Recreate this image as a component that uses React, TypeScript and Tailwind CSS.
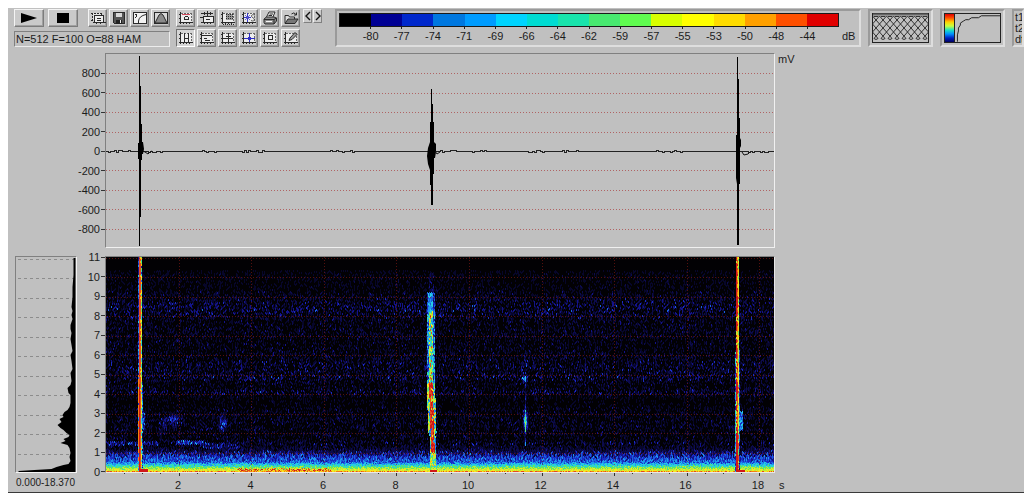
import { useMemo, useState } from 'react';
import type { ReactNode } from 'react';

const SCALE = [
    { color: 'bg-[#000000]', label: '-80' },
    { color: 'bg-[#000094]', label: '-77' },
    { color: 'bg-[#0028cc]', label: '-74' },
    { color: 'bg-[#0078e0]', label: '-71' },
    { color: 'bg-[#009cff]', label: '-69' },
    { color: 'bg-[#00d4ff]', label: '-66' },
    { color: 'bg-[#00dcd2]', label: '-64' },
    { color: 'bg-[#18e4ac]', label: '-62' },
    { color: 'bg-[#48e870]', label: '-59' },
    { color: 'bg-[#60fc50]', label: '-57' },
    { color: 'bg-[#d8ff00]', label: '-55' },
    { color: 'bg-[#ffff00]', label: '-53' },
    { color: 'bg-[#ffdc00]', label: '-50' },
    { color: 'bg-[#ffa000]', label: '-48' },
    { color: 'bg-[#ff5000]', label: '-44' },
    { color: 'bg-[#e00000]', label: '' },
];

const MILLIVOLTS = [800, 600, 400, 200, 0, -200, -400, -600, -800];
const KILOHERTZ = [11, 10, 9, 8, 7, 6, 5, 4, 3, 2, 1, 0];
const SECONDS = [2, 4, 6, 8, 10, 12, 14, 16, 18];
const HALF_SECONDS = Array.from({ length: 36 }, (_, i) => (i + 1) / 2);

const PLOT_W = 668;
const SPEC_H = 215;
const PX_PER_KHZ = 19.5;
const PX_PER_SEC = 36.3;

const PALETTE = [
    '#020104', '#07062a', '#0c0b4c', '#13138a', '#1a2cc4', '#1a60de', '#1f96ee', '#26cce4',
    '#38dea8', '#66e65c', '#bcec38', '#f4ea20', '#fcc010', '#f48010', '#e44a20', '#d01818',
];

function makeRandom(seed: number) {
    let s = seed;
    return () => {
        s = (s + 0x6d2b79f5) | 0;
        let t = Math.imul(s ^ (s >>> 15), 1 | s);
        t = (t + Math.imul(t ^ (t >>> 7), 61 | t)) ^ t;
        return ((t ^ (t >>> 14)) >>> 0) / 4294967296;
    };
}

const bump = (v: number, center: number, width: number) => Math.exp(-(((v - center) / width) ** 2));

// how lively the background noise is at a given frequency
function noiseGain(f: number) {
    if (f > 10.35) return 0.3;
    return 0.78 + 0.6 * bump(f, 8.4, 0.5) + 0.2 * bump(f, 7.2, 0.2) + 0.4 * bump(f, 5.4, 0.5)
        + 0.45 * bump(f, 4.85, 0.15) + 0.55 * bump(f, 4.12, 0.12) - 0.25 * bump(f, 3.6, 0.3)
        + 0.15 * bump(f, 2.6, 0.4) + 0.3 * bump(f, 1.5, 0.15) - (f > 9.3 ? 0.15 : 0);
}

function level(x: number, f: number, rand: () => number) {
    const r = rand();
    const q = rand();
    let v = Math.pow(r, 2.2) * 3.1 * noiseGain(f);
    if (r > 0.985 && f < 10.2) v += 1;

    // low frequency rumble, with a ragged upper edge
    const g = f + (rand() - 0.5) * (f > 0.6 ? 0.36 : 0.1);
    if (g < 1.3) v = Math.max(v, (1.3 - g) * 5 + q * 2);
    if (g < 0.95) v = 2.6 + (0.95 - g) * 3 + q * 3;
    if (g < 0.45) v = 6 + q * 1.8;
    if (g < 0.36) v = 7.2 + q * 2;
    if (g < 0.26) v = 8.8 + q * 2;
    if (g < 0.16) v = 10 + q * 2 + (x > 130 && x < 225 ? q * 4 : 0);
    if (f < 0.06) v = 11 + q * 4;

    // faint calls
    v += 4.2 * bump(x, 66, 7) * bump(f, 2.75, 0.25) * (0.3 + q);
    v += 2 * bump(x, 58, 8) * bump(f, 2.4, 0.3) * q;
    v += 4.2 * bump(x, 116, 4) * bump(f, 2.5, 0.4) * (0.3 + q);
    if (Math.abs(f - 1.48) < 0.09 && x < 52) v += 3.6 * q;
    if (Math.abs(f - 1.55) < 0.09 && x > 69 && x < 98) v += 2 + 2.6 * q;
    if (Math.abs(f - 1.4) < 0.16 && x > 96 && x < 138) v += 3 * q;

    // small click at 11.6 s
    v += 7 * bump(x, 419, 2) * bump(f, 2.65, 0.5);
    v += 5.5 * bump(x, 418, 2.2) * bump(f, 4.8, 0.17);
    v += 3.4 * bump(x, 420, 3) * bump(f, 5.6, 0.2) * q;
    if (x === 419 && f > 1.4 && f < 5) v += 1 + q * 3;

    // click at 0.9 s
    if (x === 32) v = q > 0.6 ? 4 + r * 4 : (f < 5 ? 13 : 3);
    if (x === 33) v = f < 4.5 ? 15 : 14.4;
    if (x === 34) v = f < 4 || q > 0.2 ? 14.8 : 12;
    if (x === 35) v = f > 9.6 ? 3 + q * 10 : 7 + q * 6;
    if (x === 36 && f < 4.6) v = 2 + q * 6;
    if (x >= 36 && x < 39 && f > 2.1 && f < 3.1) v = 2 + q * 5;
    if (x > 33 && x < 42 && f < 0.14) v = 15;

    // click at 9 s, leaning right towards the low end
    if (f < 9.25 && f > 0.3) {
        const shift = f < 4.5 ? (4.5 - f) * 0.6 : 0;
        const d = Math.abs(x - 324.4 - shift);
        if (f > 8.3) {
            if (d < 4) v = (d < 2.4 ? 5 : 2.5) + q * 3;
        } else if (f > 4.6) {
            if (d < 4) v = d < 2.2 ? 6 + q * 6.5 : 3 + q * 6;
            if (d < 1 && q > 0.85) v = 14;
        } else if (f > 1) {
            const wide = f > 2 ? 4.2 : 3;
            if (d < wide) v = d < 1.8 && q > 0.15 ? 14 + q * 1.9 : 5 + r * 8;
        } else if (d < 3) {
            v = 7 + q * 6;
        }
    } else if (f >= 9.25 && f < 10.2 && Math.abs(x - 325) < 3) {
        v = q * 3.6;
    }
    if (x > 323 && x < 331 && f < 0.12) v = 15;

    // click at 17.4 s
    const hot = (f > 8.4 && f < 9.1) || (f > 4 && f < 4.5) || f < 2;
    if (x === 629 && f < 6.2) v = 3 + q * 6;
    if (x === 630) v = hot || q > 0.3 ? 15 : 10;
    if (x === 631) v = hot ? 15 : 12 + q * 3.5;
    if (x === 632) v = hot && q > 0.6 ? 14 : 9.5 + q * 3;
    if (x === 633 && f < 6.4) v = 2 + q * 4.5;
    if (x > 632 && x < 637 && f > 2.15 && f < 3.15) v = 4 + q * 4;
    if (x > 629 && x < 639 && f < 0.12) v = 15;
    return v;
}

function buildSpectrogram() {
    const rand = makeRandom(4711);
    const paths: string[][] = PALETTE.map(() => []);
    for (let x = 0; x < PLOT_W; x++) {
        let y = x % 2 ? -1 : 0;
        while (y < SPEC_H) {
            const nearFloor = y > SPEC_H - 12;
            const h = nearFloor ? 1 : 2;
            const f = (SPEC_H - y - 0.5) / PX_PER_KHZ;
            const i = Math.max(0, Math.min(15, Math.floor(level(x, f, rand))));
            if (i > 0) paths[i].push(`M${x} ${y}h1v${h}h-1z`);
            y += h;
        }
    }
    return paths.map(p => p.join(''));
}

function buildTrace() {
    const rand = makeRandom(99);
    let d = 'M0 97.5';
    for (let x = 2; x <= PLOT_W; x += 2) {
        const busy = Math.sin(x / 17) + Math.sin(x / 7.3) > 0.2;
        const r = rand();
        const dy = busy && r > 0.75 ? 1 : busy && r < 0.2 ? -1 : 0;
        d += `V${97.5 + dy}H${x}`;
    }
    return d;
}

function ToolButton({ label, pressed, className = 'w-[19px]', onClick, children }: {
    label: string;
    pressed?: boolean;
    className?: string;
    onClick?: () => void;
    children: ReactNode;
}) {
    return (
        <button
            type="button"
            aria-label={label}
            title={label}
            onClick={onClick}
            className={`h-[18px] shrink-0 flex items-center justify-center border ${className} ${pressed
                ? 'bg-[#d4d4d4] border-t-[#707070] border-l-[#707070] border-b-white border-r-white'
                : 'bg-[#cacaca] border-t-[#f4f4f4] border-l-[#f4f4f4] border-b-[#7c7c7c] border-r-[#7c7c7c] shadow-[inset_-1px_-1px_0_#a0a0a0]'
                }`}
        >
            {children}
        </button>
    );
}

function Icon({ children }: { children: ReactNode }) {
    return (
        <svg viewBox="0 0 16 16" className="w-4 h-4" fill="none" stroke="#2a2a2a" strokeWidth="1" shapeRendering="crispEdges">
            {children}
        </svg>
    );
}

// plot frame with tick marks, shared by most of the view buttons
function Frame() {
    return (
        <>
            <path d="M3 3h11v9H3z" fill="#ececec" stroke="none" />
            <path d="M3 3.500h11M13.500 3v9" stroke="#6a6a6a" strokeDasharray="2 1" />
            <path d="M2.500 2v12M1 12.500h14M5.500 13v1M8.500 13v1M11.500 13v1M1 4.500h1M1 8.500h1" />
        </>
    );
}

function Panel({ className = '', children }: { className?: string; children: ReactNode }) {
    return (
        <div className={`h-[38px] border-2 border-t-[#9a9a9a] border-l-[#9a9a9a] border-b-[#dedede] border-r-[#dedede] ${className}`}>
            {children}
        </div>
    );
}

function AxisLabels({ values }: { values: number[] }) {
    return (
        <div className="flex flex-col justify-between h-full">
            {values.map(v => (
                <div key={v} className="h-3 flex items-center justify-end gap-px">
                    <span>{v}</span>
                    <i className="w-1 h-px bg-[#333]" />
                </div>
            ))}
        </div>
    );
}

function Waveform() {
    const trace = useMemo(buildTrace, []);
    return (
        <svg viewBox="0 0 668 193" preserveAspectRatio="none" className="block w-full h-[193px]" fill="none">
            <g stroke="#b06464" strokeDasharray="1 2" shapeRendering="crispEdges">
                {MILLIVOLTS.filter(v => v !== 0).map(v => {
                    const y = Math.round(97 - (v / 200) * 19.4) + 0.5;
                    return <path key={v} d={`M0 ${y}H668`} />;
                })}
            </g>
            <path d={trace} stroke="#222" shapeRendering="crispEdges" />
            <g fill="#000">
                <path d="M33 2h1v30h1v38h1v18h1l1 7-1 5h-1v6h-1v57h-1v29h-1v-87h-1v-16h1z" />
                <path d="M325 35h1v15h1v18h1v20l2 2v8l-1 6h-1v16h-1v31h-2v-20h-1v-15l-2-6-1-8 1-8 2-6v-20h1z" />
                <path d="M631 3h1v22h1v39h1v20l1 2v6l-1 2v36h-1v61h-2v-61l-1-6v-43h1z" />
            </g>
            <path d="M37 97l2 1 3 2 2-2 2-1M329 97l2 3 3-2M636 98l2 3 4-1 2-2" stroke="#111" />
        </svg>
    );
}

function Spectrogram() {
    const paths = useMemo(buildSpectrogram, []);
    return (
        <svg viewBox="0 0 668 215" preserveAspectRatio="none" className="block w-full h-[215px] bg-[#020104]">
            <g shapeRendering="crispEdges">
                {paths.map((d, i) => d && <path key={PALETTE[i]} d={d} fill={PALETTE[i]} />)}
            </g>
            <g stroke="#8c1c14" strokeOpacity="0.6" strokeDasharray="1 2" shapeRendering="crispEdges">
                {KILOHERTZ.filter(k => k > 0).map(k => {
                    const y = Math.round(SPEC_H - k * PX_PER_KHZ) + 0.5;
                    return <path key={k} d={`M0 ${y}H668`} />;
                })}
                {SECONDS.map(s => {
                    const x = Math.round(s * PX_PER_SEC) + 0.5;
                    return <path key={s} d={`M${x} 0V210`} />;
                })}
            </g>
        </svg>
    );
}

function MeanSpectrum() {
    return (
        <svg viewBox="0 0 59 215" className="block w-full h-[215px]">
            <g stroke="#8c8c8c" strokeDasharray="3 3" shapeRendering="crispEdges">
                {KILOHERTZ.filter(k => k > 0).map(k => (
                    <path key={k} d={`M1 ${Math.round(SPEC_H - k * PX_PER_KHZ) + 1.5}H59`} />
                ))}
            </g>
            <path
                d="M59 1H57V18L56 30V40L55 50L56 54L55 58L56 62L54 68V72L55 76L54 82L55 88L56 94L54 98L55 104L56 112L54 116L55 124L54 128L51 131L52 136L54 138V146L53 150L51 153L48 155L46 158L47 160L43 162L45 165L41 168L44 171L47 173L50 176L53 178L52 180L47 182L49 184L44 186L51 188L53 191L54 196L53 200L54 204L52 207L47 208L40 210L35 212L18 213L2 214V215H59Z"
                fill="#000"
            />
        </svg>
    );
}

export default function App() {
    const [view, setView] = useState('Grid');

    return (
        <div className="bg-white pt-2 pl-2 pb-1 overflow-hidden font-['Liberation_Sans',Arial,sans-serif] text-[11px] leading-3 text-[#1c1c1c]">
            <main className="bg-[#c0c0c0] border-b border-[#3a3a3a]">
                <header className="flex items-start pt-px pl-[6px] h-[45px]">
                    <div className="w-[156px] shrink-0">
                        <div className="flex">
                            <ToolButton label="Play" className="w-[30px]">
                                <svg viewBox="0 0 16 10" className="w-4 h-[10px]"><path d="M0 0L16 5L0 10Z" /></svg>
                            </ToolButton>
                            <ToolButton label="Stop" className="w-[30px] ml-1">
                                <svg viewBox="0 0 12 10" className="w-3 h-[10px]"><path d="M0 0H12V10H0Z" /></svg>
                            </ToolButton>
                            <div className="flex gap-[2px] ml-[10px]">
                                <ToolButton label="Copy">
                                    <Icon>
                                        <path d="M3 3h8v7H3z" fill="#e4e4e4" stroke="none" />
                                        <path d="M1 3.500h11M2.500 3v8M1 10.500h3M11.500 3v3" strokeDasharray="2 1" />
                                        <rect x="4.500" y="5.500" width="9" height="7" fill="#eee" />
                                        <path d="M3 12.500h12.500M6.500 13v1M10.500 13v1M7 8.500h4M7 10.500h4" />
                                    </Icon>
                                </ToolButton>
                                <ToolButton label="Save">
                                    <Icon>
                                        <path d="M2.500 2.500h11v11h-10l-1-1z" fill="#555" />
                                        <path d="M5 3h6v4H5z" fill="#d8d8d8" stroke="none" />
                                        <path d="M5 10h6v4H5z" fill="#222" stroke="none" />
                                        <path d="M9 10h1v3H9z" fill="#eee" stroke="none" />
                                    </Icon>
                                </ToolButton>
                                <ToolButton label="Transfer curve">
                                    <Icon>
                                        <rect x="1.500" y="2.500" width="13" height="11" fill="#f2f2f2" />
                                        <path d="M3 4.500h2M4.500 4v3M3 7.500h1" />
                                        <path d="M6.500 13V11Q7 6 14 4.500" shapeRendering="auto" />
                                    </Icon>
                                </ToolButton>
                                <ToolButton label="Window">
                                    <Icon>
                                        <rect x="1.500" y="2.500" width="13" height="11" fill="#d8d8d8" />
                                        <path d="M2 13L6 5Q8 2 10 5L14 13Z" fill="#8a8a8a" shapeRendering="auto" />
                                    </Icon>
                                </ToolButton>
                            </div>
                        </div>
                        <div className="mt-1 h-4 px-px border border-t-[#808080] border-l-[#808080] border-b-[#ececec] border-r-[#ececec] leading-[14px] whitespace-nowrap">
                            N=512 F=100 O=88 HAM
                        </div>
                    </div>

                    <div className="grid grid-cols-6 gap-[2px] ml-[6px] w-[124px] shrink-0">
                        <ToolButton label="Select">
                            <Icon><Frame /><path d="M4 4.500h8" stroke="#d0485c" /><path d="M6.500 7v3M10.500 7v3M7 6.500h3M7 9.500h3" /></Icon>
                        </ToolButton>
                        <ToolButton label="Zoom time">
                            <Icon>
                                <path d="M2 3.500h12M5.500 2v3M8.500 1v5M11.500 2v3" />
                                <rect x="4.500" y="6.500" width="10" height="6" fill="#eee" />
                                <path d="M2 12.500h12M1 7.500h3M7 9.500h4M5.500 13v1M8.500 13v1M11.500 13v1" />
                            </Icon>
                        </ToolButton>
                        <ToolButton label="Zoom region">
                            <Icon>
                                <Frame />
                                <path d="M6 4h7v6H6z" fill="#999" stroke="none" />
                                <path d="M6 4.500h7M6 6.500h7M6 8.500h7M3 14.500h11" strokeDasharray="1 1" />
                            </Icon>
                        </ToolButton>
                        <ToolButton label="Scale">
                            <Icon>
                                <Frame />
                                <path d="M6.500 3v9M3 7.500h7" stroke="#3636c8" />
                                <path d="M4 5l5 5M9 5l-5 5" stroke="#6a6ad0" shapeRendering="auto" />
                                <path d="M14 5Q10 4 10.500 6.500L13.500 9Q13 12 10 10.500" stroke="#555" shapeRendering="auto" />
                            </Icon>
                        </ToolButton>
                        <ToolButton label="Print">
                            <Icon>
                                <g shapeRendering="auto">
                                    <path d="M4 8L7 2H13L10.500 8" fill="#f4f4f4" />
                                    <path d="M2 9L4.500 7H12L14.500 8V11L12 14H3L2 12.500Z" fill="#8c8c8c" />
                                    <path d="M2 9.500H12V14M12 9.500L14.500 8M7.500 4H11M6.500 5.500H10" />
                                    <path d="M4 11.500h6" stroke="#f4f4f4" />
                                </g>
                            </Icon>
                        </ToolButton>
                        <ToolButton label="Open">
                            <Icon>
                                <g shapeRendering="auto">
                                    <path d="M2 13V5.500H5.500L6.500 7H11.500V9" fill="#ddd" />
                                    <path d="M2 13.500L5 9H15L12 13.500Z" fill="#777" />
                                    <path d="M8.500 4Q11 1.500 13 4.500M13.500 2.500V5H11" />
                                </g>
                            </Icon>
                        </ToolButton>
                        <ToolButton label="Grid" pressed={view === 'Grid'} onClick={() => setView('Grid')}>
                            <Icon><Frame /><path d="M6.500 3v10M10.500 3v10M6 8.500h5" /></Icon>
                        </ToolButton>
                        <ToolButton label="Levels" pressed={view === 'Levels'} onClick={() => setView('Levels')}>
                            <Icon><Frame /><path d="M3 5.500h10M5 8.500h3M6 10.500h5" /></Icon>
                        </ToolButton>
                        <ToolButton label="Crosshair" pressed={view === 'Crosshair'} onClick={() => setView('Crosshair')}>
                            <Icon><Frame /><path d="M8.500 3v10M3 8.500h10M6 6.500h5" /></Icon>
                        </ToolButton>
                        <ToolButton label="Marker" pressed={view === 'Marker'} onClick={() => setView('Marker')}>
                            <Icon><Frame /><path d="M8.500 3v9M3 8.500h11M7 7.500h3M7 9.500h3" stroke="#2e2ec4" /></Icon>
                        </ToolButton>
                        <ToolButton label="Box" pressed={view === 'Box'} onClick={() => setView('Box')}>
                            <Icon><Frame /><path d="M6.500 5.500h4v4h-4z" /></Icon>
                        </ToolButton>
                        <ToolButton label="Draw" pressed={view === 'Draw'} onClick={() => setView('Draw')}>
                            <Icon><Frame /><path d="M6 10.500L7 8L12 2.500L14 4.500L9 9.500Z" fill="#999" shapeRendering="auto" /></Icon>
                        </ToolButton>
                    </div>

                    <div className="flex gap-px ml-[3px] w-[19px] shrink-0">
                        {['Previous', 'Next'].map(name => (
                            <button
                                key={name}
                                type="button"
                                aria-label={name}
                                className="w-[9px] h-[14px] flex items-center justify-center bg-[#cacaca] border border-t-[#f0f0f0] border-l-[#f0f0f0] border-b-[#808080] border-r-[#808080]"
                            >
                                <svg viewBox="0 0 6 10" className="w-[6px] h-[10px] shrink-0" fill="none" stroke="#111" strokeWidth="1.4">
                                    <path d={name === 'Next' ? 'M1 1L5 5L1 9' : 'M5 1L1 5L5 9'} />
                                </svg>
                            </button>
                        ))}
                    </div>

                    <Panel className="flex ml-[13px] pl-[2px] pt-[2px] w-[526px] shrink-0">
                        <div className="w-[500px]">
                            <div className="flex h-[14px] border border-[#1a1a1a]">
                                {SCALE.map(s => <div key={s.color} className={`flex-1 ${s.color}`} />)}
                            </div>
                            <div className="flex px-4">
                                {SCALE.filter(s => s.label).map(s => (
                                    <div key={s.label} className="flex-1 flex flex-col items-center">
                                        <i className="w-px h-[2px] bg-[#222]" />
                                        <span className="mt-px">{s.label}</span>
                                    </div>
                                ))}
                            </div>
                        </div>
                        <span className="mt-[17px] ml-[3px]">dB</span>
                    </Panel>

                    <Panel className="ml-[7px] p-[2px] w-[65px] shrink-0">
                        <svg viewBox="0 0 57 30" preserveAspectRatio="none" className="block w-full h-full" fill="none" stroke="#222">
                            <rect x="0.500" y="0.500" width="56" height="29" />
                            <path d="M1 1.500H56" stroke="#666" strokeWidth="2" />
                            {[0, 1, 2, 3, 4, 5, 6, 7].map(i => {
                                const x = i * 7 + 0.5;
                                return (
                                    <path
                                        key={i}
                                        d={`M${x} 3l7 8l-7 8l5.500 6.500M${x + 7} 3l-7 8l7 8l-5.500 6.500M${x + 1.5} 25.500q2 2 4 0M${x + 1.5} 3.500h4`}
                                        strokeWidth="0.9"
                                    />
                                );
                            })}
                        </svg>
                    </Panel>

                    <Panel className="ml-[7px] p-[2px] w-[65px] shrink-0">
                        <div className="flex h-full border border-[#222]">
                            <div className="w-[10px] border-r border-[#222] bg-[linear-gradient(#e00000,#ff5000,#ffd000,#c8ff40,#20e0c0,#0090ff,#0020c0,#000060)]" />
                            <svg viewBox="0 0 46 28" className="block h-[28px] flex-1" fill="none" stroke="#222">
                                <path d="M2.500 28V21L3.500 17V14L5.500 11V9L8.500 7L11 5.500H14L17 3.500H24L27 1.500H46" />
                            </svg>
                        </div>
                    </Panel>

                    <Panel className="ml-[7px] pl-px pt-px flex-1 min-w-0 overflow-hidden leading-[11px]">
                        <div>t1</div>
                        <div>t2</div>
                        <div>dt</div>
                    </Panel>
                </header>

                <section className="grid grid-cols-[97px_670fr_249fr]">
                    <div className="pt-[14px] h-[195px]">
                        <div className="h-[168px]">
                            <AxisLabels values={MILLIVOLTS} />
                        </div>
                    </div>
                    <div className="border border-t-[#808080] border-l-[#808080] border-b-[#f0f0f0] border-r-[#f0f0f0]">
                        <Waveform />
                    </div>
                    <div className="pl-[3px]">mV</div>
                </section>

                <section className="grid grid-cols-[97px_670fr_249fr] mt-2">
                    <div className="flex">
                        <div className="ml-[7px] w-[62px] shrink-0 border border-t-[#808080] border-l-[#808080] border-b-[#f4f4f4] border-r-[#f4f4f4]">
                            <MeanSpectrum />
                        </div>
                        <div className="flex-1 h-[227px] -mt-[5px] -mb-[5px]">
                            <AxisLabels values={KILOHERTZ} />
                        </div>
                    </div>
                    <div className="border border-t-[#808080] border-l-[#808080] border-b-[#e8e8e8] border-r-[#e8e8e8]">
                        <Spectrogram />
                    </div>
                    <div />
                </section>

                <footer className="grid grid-cols-[97px_670fr_249fr] h-[19px]">
                    <div className="pl-2 pt-1 text-[10px]">0.000-18.370</div>
                    <div>
                        <svg viewBox="0 0 670 3" preserveAspectRatio="none" className="block w-full h-[3px]" stroke="#333" shapeRendering="crispEdges">
                            {HALF_SECONDS.map(s => (
                                <path key={s} d={`M${Math.round(s * PX_PER_SEC) + 1.5} 0v${s % 2 ? 1 : 3}`} />
                            ))}
                        </svg>
                        <div className="flex pl-[5.5%] pt-[3px]">
                            {SECONDS.map(s => (
                                <span key={s} className="w-[11.45%] shrink-0 text-center">{s}</span>
                            ))}
                        </div>
                    </div>
                    <div className="pl-1 pt-[6px]">s</div>
                </footer>
            </main>
        </div>
    );
}
